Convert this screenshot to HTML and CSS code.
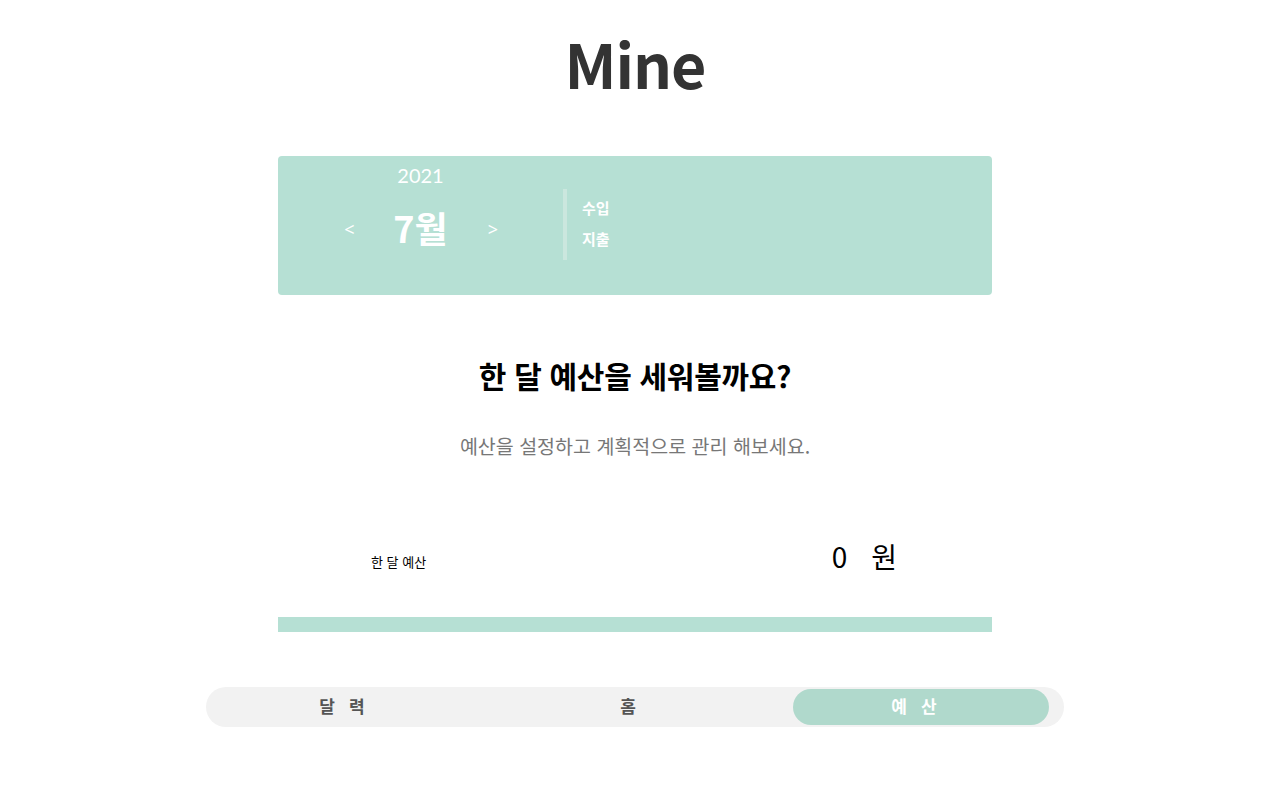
FILE: index.html
```html
<!DOCTYPE html>
<html lang="ko">
<head>
<meta charset="utf-8">
<title>Mine</title>
<link rel="stylesheet" href="styles.css">
</head>
<body>
<div class="page">
  <h1 class="logo">Mine</h1>

  <section class="summary">
    <div class="month-box">
      <div class="year">2021</div>
      <div class="month-row">
        <span class="arrow">&lt;</span>
        <span class="month">7월</span>
        <span class="arrow">&gt;</span>
      </div>
    </div>
    <div class="divider"></div>
    <div class="totals">
      <div class="total">수입</div>
      <div class="total">지출</div>
    </div>
  </section>

  <section class="intro">
    <h2 class="intro-title">한 달 예산을 세워볼까요?</h2>
    <p class="intro-text">예산을 설정하고 계획적으로 관리 해보세요.</p>
  </section>

  <section class="budget">
    <span class="budget-label">한 달 예산</span>
    <span class="budget-value"><span class="num">0</span><span class="unit">원</span></span>
  </section>
  <div class="budget-bar"></div>

  <nav class="tabs">
    <div class="tab">달력</div>
    <div class="tab">홈</div>
    <div class="tab active"><span class="pill">예산</span></div>
  </nav>
</div>
</body>
</html>
```

FILE: styles.css
```css
* { box-sizing: border-box; }
html, body { margin: 0; padding: 0; background: #fff; }
body {
  font-family: "Noto Sans CJK KR", "Noto Sans", sans-serif;
  color: #000;
  padding-right: 10px;
}
.page {
  display: flex;
  flex-direction: column;
  align-items: center;
}
.logo {
  margin: 22px 0 0;
  height: 82px;
  line-height: 82px;
  font-size: 61px;
  font-weight: 700;
  color: #333;
  letter-spacing: -1px;
}
.summary {
  margin-top: 52px;
  width: 714px;
  height: 139px;
  background: #b6e0d4;
  border-radius: 4px;
  display: flex;
  align-items: flex-start;
  color: #fff;
}
.month-box {
  width: 285px;
  padding-top: 8px;
  display: flex;
  flex-direction: column;
  align-items: center;
}
.year {
  font-family: Lato, "Noto Sans", sans-serif;
  font-size: 20px;
  line-height: 24px;
  margin-top: -1px;
}
.month-row {
  margin-top: 19px;
  display: flex;
  align-items: center;
  gap: 40px;
  height: 44px;
}
.arrow {
  font-family: "Noto Sans", sans-serif;
  font-size: 18px;
  width: 9px;
  text-align: center;
  margin-top: 2px;
}
.month {
  font-size: 36px;
  font-weight: 700;
  line-height: 44px;
  margin-top: -3px;
}
.divider {
  margin-top: 33px;
  width: 4px;
  height: 71px;
  background: #cbe7de;
}
.totals {
  margin-top: 36px;
  padding-left: 15px;
}
.total {
  font-size: 15px;
  font-weight: 700;
  line-height: 31px;
}
.intro {
  margin-top: 55px;
  display: flex;
  flex-direction: column;
  align-items: center;
}
.intro-title {
  margin: 0;
  font-size: 30px;
  font-weight: 700;
  line-height: 50px;
  letter-spacing: -0.3px;
  color: #000;
}
.intro-text {
  margin: 28px 0 0;
  font-size: 19.5px;
  line-height: 36px;
  color: #777;
}
.budget {
  margin-top: 70px;
  width: 714px;
  display: flex;
  justify-content: space-between;
  align-items: center;
  padding: 0 95px 0 93px;
  height: 44px;
}
.budget-label {
  font-size: 13px;
  margin-top: 10px;
}
.budget-value {
  font-size: 28px;
  display: flex;
  gap: 24px;
}
.budget-bar {
  margin-top: 39px;
  width: 714px;
  height: 15px;
  background: #b6e0d4;
}
.tabs {
  margin-top: 55px;
  width: 858px;
  height: 40px;
  background: #f2f2f2;
  border-radius: 20px;
  display: grid;
  grid-template-columns: repeat(3, 1fr);
}
.tab {
  display: flex;
  align-items: center;
  justify-content: center;
  font-size: 17px;
  font-weight: 700;
  color: #555;
  letter-spacing: 14px;
  padding-bottom: 3px;
}
.tab.active {
  padding: 2px 15px;
  letter-spacing: 0;
}
.pill {
  width: 100%;
  height: 36px;
  border-radius: 18px;
  background: #b0d9cc;
  color: #fff;
  display: flex;
  align-items: center;
  justify-content: center;
  letter-spacing: 14px;
  padding-bottom: 3px;
}
```
